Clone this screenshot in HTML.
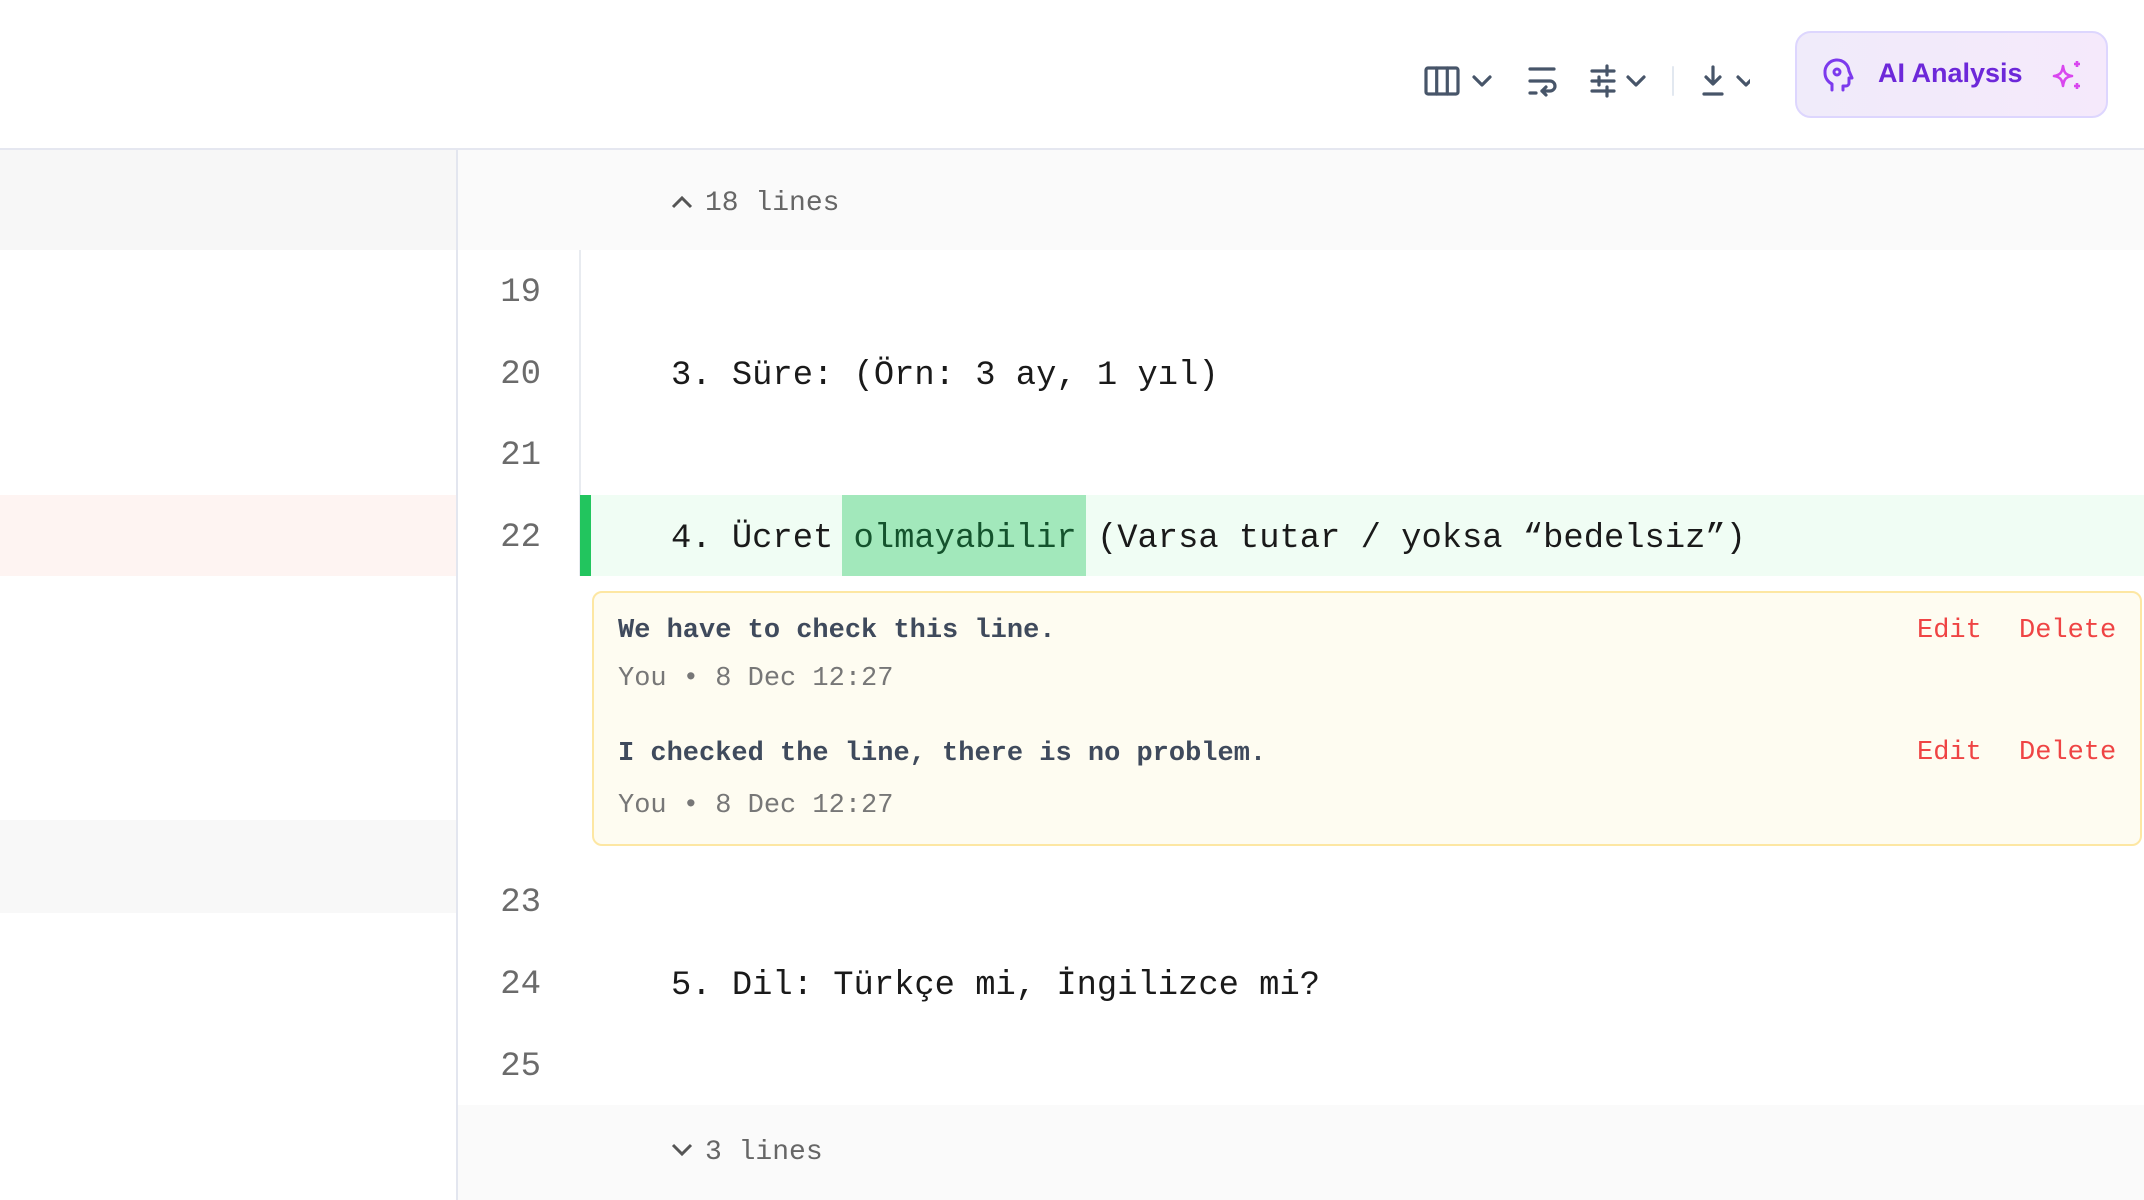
<!DOCTYPE html>
<html><head><meta charset="utf-8"><style>
*{margin:0;padding:0;box-sizing:border-box}
body{width:2144px;height:1200px;overflow:hidden;background:#fff;font-family:"Liberation Mono",monospace;position:relative}
.abs{position:absolute}
.ln{position:absolute;left:458px;width:83px;text-align:right;font-size:34px;color:#6b6b6b;line-height:82px}
.code{position:absolute;left:671px;font-size:33.8px;color:#1a1a1a;line-height:82px;white-space:pre}
.ct{position:absolute;left:618px;font-size:27px;font-weight:bold;color:#3f4a5c;white-space:pre}
.meta{position:absolute;left:618px;font-size:27px;color:#777;white-space:pre}
.act{position:absolute;font-size:27px;color:#ef4444;white-space:pre}
</style></head><body>
<div class="abs" style="left:0;top:148px;width:2144px;height:2px;background:#e5e7f0"></div>
<svg class="abs" style="left:1410px;top:55px" width="340" height="52" viewBox="0 0 340 52" fill="none" stroke="#475569" stroke-width="3.2" stroke-linecap="round" stroke-linejoin="round">
 <rect x="16" y="13" width="32" height="26" rx="2"/><line x1="26.7" y1="13" x2="26.7" y2="39"/><line x1="37.3" y1="13" x2="37.3" y2="39"/>
 <polyline points="64,22 72,30 80,22"/>
 <line x1="120" y1="14" x2="144" y2="14"/><path d="M120 26h20a5 5 0 0 1 0 10h-8"/><polyline points="136,32 132,36 136,40"/><line x1="120" y1="38" x2="126" y2="38"/>
 <line x1="182" y1="16" x2="204" y2="16"/><line x1="182" y1="26" x2="204" y2="26"/><line x1="182" y1="36" x2="204" y2="36"/>
 <line x1="197" y1="11" x2="197" y2="20"/><line x1="189" y1="22" x2="189" y2="30"/><line x1="197" y1="32" x2="197" y2="41"/>
 <polyline points="218,22 226,30 234,22"/>
 <line x1="263" y1="12" x2="263" y2="40" stroke="#e2e8f0" stroke-width="2"/>
 <path d="M303 12v16M296 22l7 7 7-7M294 39h18"/>
 <polyline points="328,22 336,30 344,22"/>
</svg>
<div class="abs" style="left:1795px;top:31px;width:313px;height:87px;border:2px solid #ddd6fe;border-radius:16px;background:linear-gradient(90deg,#f0ebfa,#f5e9fb)"></div>
<svg class="abs" style="left:1822px;top:58px" width="32" height="34" viewBox="0 0 32 34" fill="none" stroke="#7c3aed" stroke-width="3" stroke-linecap="round" stroke-linejoin="round">
 <path d="M10 32v-6c-4-2-7-6-7-11A12 12 0 0 1 27 13l3 7h-3v5a3 3 0 0 1-3 3h-3v4"/><circle cx="15" cy="14" r="3"/>
</svg>
<div class="abs" style="left:1878px;top:58px;font-family:'Liberation Sans',sans-serif;font-weight:bold;font-size:27px;color:#6d28d9">AI Analysis</div>
<svg class="abs" style="left:2050px;top:58px" width="36" height="36" viewBox="0 0 36 36" fill="none" stroke="#d946ef" stroke-width="2.6" stroke-linejoin="round">
 <path d="M13 8c1 7 3 9 9 10-6 1-8 3-9 10-1-7-3-9-9-10 6-1 8-3 9-10z"/><path d="M27 3v6M24 6h6M27 25v6M24 28h6"/>
</svg>
<div class="abs" style="left:0;top:150px;width:458px;height:100px;background:#f7f7f7"></div>
<div class="abs" style="left:0;top:495px;width:456px;height:81px;background:#fef4f2"></div>
<div class="abs" style="left:0;top:820px;width:456px;height:93px;background:#f8f8f8"></div>
<div class="abs" style="left:456px;top:150px;width:2px;height:1050px;background:#e3e6ef"></div>
<div class="abs" style="left:458px;top:150px;width:1686px;height:100px;background:#fafafa"></div>
<div class="abs" style="left:458px;top:1105px;width:1686px;height:95px;background:#fafafa"></div>
<svg class="abs" style="left:670px;top:192px" width="24" height="20" viewBox="0 0 24 20" fill="none" stroke="#555" stroke-width="3"><polyline points="3,15 12,6 21,15"/></svg>
<div class="abs" style="left:705px;top:188px;font-size:28px;color:#666">18 lines</div>
<svg class="abs" style="left:670px;top:1140px" width="24" height="20" viewBox="0 0 24 20" fill="none" stroke="#555" stroke-width="3"><polyline points="3,5 12,14 21,5"/></svg>
<div class="abs" style="left:705px;top:1137px;font-size:28px;color:#666">3 lines</div>
<div class="abs" style="left:579px;top:250px;width:2px;height:326px;background:#e8ebf0"></div>
<div class="abs" style="left:581px;top:495px;width:1563px;height:81px;background:#f0fdf4"></div>
<div class="abs" style="left:580px;top:495px;width:11px;height:81px;background:#22c55e"></div>
<div class="abs" style="left:842px;top:495px;width:244px;height:81px;background:#a2e8bb"></div>
<div class="ln" style="top:252px">19</div>
<div class="ln" style="top:334px">20</div>
<div class="ln" style="top:415px">21</div>
<div class="ln" style="top:497px">22</div>
<div class="ln" style="top:862px">23</div>
<div class="ln" style="top:944px">24</div>
<div class="ln" style="top:1026px">25</div>
<div class="code" style="top:335px">3. Süre: (Örn: 3 ay, 1 yıl)</div>
<div class="code" style="top:498px">4. Ücret <span style="color:#14532d">olmayabilir</span> (Varsa tutar / yoksa “bedelsiz”)</div>
<div class="code" style="top:945px">5. Dil: Türkçe mi, İngilizce mi?</div>
<div class="abs" style="left:592px;top:591px;width:1550px;height:255px;background:#fefcf1;border:2px solid #fde7a3;border-radius:10px"></div>
<div class="ct" style="top:616px">We have to check this line.</div>
<div class="meta" style="top:664px">You • 8 Dec 12:27</div>
<div class="act" style="left:1917px;top:616px">Edit</div>
<div class="act" style="left:2019px;top:616px">Delete</div>
<div class="ct" style="top:739px">I checked the line, there is no problem.</div>
<div class="meta" style="top:791px">You • 8 Dec 12:27</div>
<div class="act" style="left:1917px;top:738px">Edit</div>
<div class="act" style="left:2019px;top:738px">Delete</div>
</body></html>
